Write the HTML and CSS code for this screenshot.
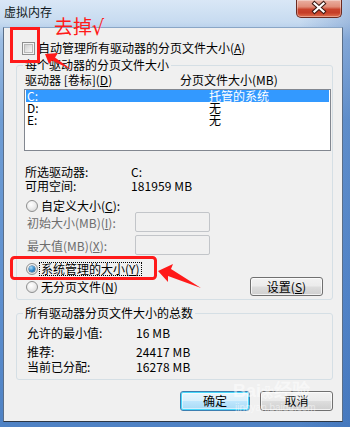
FILE: index.html
```html
<!DOCTYPE html>
<html lang="zh-CN">
<head>
<meta charset="utf-8">
<title>虚拟内存</title>
<link rel="stylesheet" href="styles.css">
</head>
<body>
<div class="window">
  <div class="titlebar">
    <span class="title">虚拟内存</span>
    <div class="close">
      <svg width="46" height="18" viewBox="0 0 46 18">
        <path d="M18.5 4.5 L27.5 12.5 M27.5 4.5 L18.5 12.5" stroke="#3b1a14" stroke-width="4.2" stroke-linecap="square"/>
        <path d="M18.5 4.5 L27.5 12.5 M27.5 4.5 L18.5 12.5" stroke="#ffffff" stroke-width="2.2" stroke-linecap="square"/>
      </svg>
    </div>
  </div>
  <div class="client">
    <div class="auto-row">
      <span class="checkbox"></span>
      <span>自动管理所有驱动器的分页文件大小(<u>A</u>)</span>
    </div>
    <fieldset class="group g1">
      <legend>每个驱动器的分页文件大小</legend>
      <div class="list-head"><span class="hcol1">驱动器 [卷标](<u>D</u>)</span><span>分页文件大小(MB)</span></div>
      <div class="listbox">
        <div class="lrow sel"><span class="lc1">C:</span><span>托管的系统</span></div>
        <div class="lrow"><span class="lc1">D:</span><span>无</span></div>
        <div class="lrow"><span class="lc1">E:</span><span>无</span></div>
      </div>
      <div class="info">
        <div class="kv"><span class="k">所选驱动器:</span><span class="mono">C:</span></div>
        <div class="kv"><span class="k">可用空间:</span><span class="mono">181959 MB</span></div>
      </div>
      <div class="radio-row r-custom"><span class="radio"></span><span>自定义大小(<u>C</u>):</span></div>
      <div class="size-row"><span class="slabel">初始大小(MB)(<u>I</u>):</span><span class="input"></span></div>
      <div class="size-row second"><span class="slabel">最大值(MB)(<u>X</u>):</span><span class="input"></span></div>
      <div class="radio-row r-system"><span class="radio on"></span><span class="focus">系统管理的大小(<u>Y</u>)</span></div>
      <div class="radio-row r-none">
        <span class="radio"></span><span>无分页文件(<u>N</u>)</span>
        <button class="btn set">设置(<u>S</u>)</button>
      </div>
    </fieldset>
    <fieldset class="group g2">
      <legend>所有驱动器分页文件大小的总数</legend>
      <div class="kv2 first"><span class="k2">允许的最小值:</span><span class="mono">16 MB</span></div>
      <div class="kv2 mid"><span class="k2">推荐:</span><span class="mono">24417 MB</span></div>
      <div class="kv2 last"><span class="k2">当前已分配:</span><span class="mono">16278 MB</span></div>
    </fieldset>
    <div class="actions">
      <button class="btn default ok">确定</button>
      <button class="btn cancel">取消</button>
    </div>
  </div>
</div>
<div class="watermark"><span class="wm1">Bai<span class="paw">❀</span>经验</span><span class="wm2">jingyan.baidu.com</span></div>
<svg class="annot" width="350" height="427" viewBox="0 0 350 427">
  <rect x="11.5" y="28.5" width="27" height="33" fill="none" stroke="#ff1a1a" stroke-width="3"/>
  <path d="M45 54 L58 53 L55 57.5 L72 70 L52 60.5 L49 64 Z" fill="#ff1a1a"/>
  <rect x="11.5" y="257.5" width="144" height="21" rx="3" fill="none" stroke="#ff1a1a" stroke-width="3"/>
  <path d="M158 271 L173 264 L171 269 L201 288 L168 276 L168 282 Z" fill="#ff1a1a"/>
</svg>
<div class="note">去掉<span class="tick">√</span></div>
</body>
</html>
```
FILE: styles.css
```css
* { box-sizing: border-box; }
html, body { margin: 0; padding: 0; }
body {
  width: 350px;
  height: 427px;
  overflow: hidden;
  position: relative;
  font-family: "Noto Sans CJK SC", "Noto Sans", sans-serif;
  font-size: 12px;
  color: #000;
  background: #5b8cca;
}
u { text-decoration: underline; text-underline-offset: 1px; }

.window {
  width: 350px;
  height: 427px;
  display: flex;
  flex-direction: column;
  background:
    linear-gradient(to right, rgba(255,255,255,0) 0, rgba(255,255,255,0) 300px, rgba(40,90,170,0.25) 350px),
    linear-gradient(to bottom, #d9e7f6 0, #c7dbf0 22px, #9dbde3 40px, #6f9dd4 120px, #5d8fcf 300px, #4f82c4 427px);
}

.titlebar {
  height: 27px;
  display: flex;
  align-items: flex-start;
  padding-left: 4px;
  flex-shrink: 0;
}
.title {
  margin-top: 4px;
  line-height: 16px;
  font-size: 12px;
  color: #101820;
}
.close {
  margin-left: auto;
  margin-right: 8px;
  width: 46px;
  height: 18px;
  border: 1px solid #6b2a20;
  border-top: none;
  border-radius: 0 0 5px 5px;
  background: linear-gradient(to bottom, #eab0a2 0, #e08c78 40%, #c9432c 55%, #c53d26 75%, #e0714f 100%);
  box-shadow: inset 0 0 0 1px rgba(255,255,255,0.35);
}
.close svg { display: block; margin: -1px 0 0 -1px; }

.client {
  margin: 0 7px 5px 3px;
  flex: 1;
  background: #f0f0f0;
  border: 1px solid #5a6e88;
  border-top-color: #8aa6c6;
  border-bottom-color: #2d3744;
  padding: 0 9px 0 12px;
  display: flex;
  flex-direction: column;
}

.auto-row {
  margin-top: 13px;
  height: 14px;
  display: flex;
  align-items: center;
  padding-left: 6px;
  line-height: 14px;
}
.checkbox {
  width: 13px;
  height: 13px;
  border: 1px solid #8e8f8f;
  background: #f4f4f4;
  box-shadow: inset 0 0 0 1px #f4f4f4, inset 0 0 0 2px #b9b9b9;
  margin-right: 3px;
  flex-shrink: 0;
  position: relative;
}
.checkbox::after {
  content: "";
  position: absolute;
  left: 2px; top: 2px; right: 2px; bottom: 2px;
  background: linear-gradient(135deg, #cfcfcf, #f7f7f7);
}

.group {
  margin: 0;
  padding: 0;
  min-width: 0;
  border: 1px solid #d5dfe5;
  border-radius: 3px;
}
.group legend {
  margin-left: 6px;
  padding: 0 2px;
  line-height: 16px;
  height: 16px;
}
.g1 { margin-top: 2px; padding-bottom: 3px; }

.list-head {
  height: 14px;
  line-height: 14px;
  padding-left: 8px;
  display: flex;
}
.hcol1 { width: 155px; }

.listbox {
  margin: 2px 1px 0 7px;
  height: 62px;
  border: 1px solid #828790;
  background: #fff;
  padding: 0 1px;
}
.lrow {
  height: 12px;
  line-height: 12px;
  display: flex;
  align-items: center;
  padding-left: 1px;
  white-space: nowrap;
}
.lrow.sel { background: #3399ff; color: #fff; }
.lc1 { width: 182px; }

.info { margin-top: 14px; }
.kv {
  height: 14px;
  line-height: 14px;
  display: flex;
  padding-left: 8px;
}
.k { width: 106px; }
.mono { letter-spacing: 0.1px; }

.radio-row {
  display: flex;
  align-items: center;
  padding-left: 9px;
}
.radio {
  width: 12px;
  height: 12px;
  border-radius: 50%;
  border: 1px solid #8e8f8f;
  background: radial-gradient(circle at 40% 35%, #ffffff 0, #f0f0f0 40%, #d2d2d2 100%);
  margin-right: 3px;
  flex-shrink: 0;
  position: relative;
}
.radio.on::after {
  content: "";
  position: absolute;
  left: 2px; top: 2px;
  width: 6px; height: 6px;
  border-radius: 50%;
  background: radial-gradient(circle at 35% 30%, #a9dcfb 0, #2a84c8 55%, #114c86 100%);
  box-shadow: 0 0 0 0.5px #1b4f80;
}
.r-custom { margin-top: 6px; height: 13px; line-height: 13px; }

.size-row {
  height: 20px;
  display: flex;
  align-items: center;
  padding-left: 10px;
}
.size-row.second { margin-top: 3px; }
.slabel { width: 108px; color: #6d6d6d; }
.input {
  width: 75px;
  height: 20px;
  border: 1px solid #c2c5c9;
  border-radius: 2px;
  background: #f0f0f0;
}

.r-system { margin-top: 7px; height: 14px; line-height: 12px; }
.focus {
  outline: 1px dotted #000;
  outline-offset: 0;
  padding: 0 1px;
  margin-left: -1px;
}

.r-none { margin-top: 1px; height: 19px; }

.btn {
  font: inherit;
  font-size: 12px;
  color: #000;
  height: 19px;
  line-height: 16px;
  padding: 0;
  border: 1px solid #707070;
  border-radius: 3px;
  background: linear-gradient(to bottom, #f2f2f2 0, #ebebeb 48%, #dddddd 52%, #cfcfcf 100%);
  box-shadow: inset 0 0 0 1px rgba(255,255,255,0.7);
}
.set { margin-left: auto; margin-right: 9px; width: 73px; }

.g2 { margin-top: 5px; padding-bottom: 5px; }
.kv2 {
  height: 14px;
  line-height: 14px;
  display: flex;
  padding-left: 10px;
}
.kv2.first { margin-top: 5px; }
.kv2.mid { margin-top: 5px; }
.kv2.last { margin-top: 1px; }
.k2 { width: 109px; }

.actions {
  margin-top: 11px;
  display: flex;
  justify-content: flex-end;
  gap: 10px;
}
.ok { width: 70px; height: 20px; }
.cancel { width: 73px; height: 20px; }
.btn.default {
  border-color: #3c7fb1;
  background: linear-gradient(to bottom, #eaf6fd 0, #d9f0fc 48%, #bee6fd 52%, #a7d9f5 100%);
  box-shadow: inset 0 0 0 1px #48d8fb, inset 0 0 0 2px rgba(255,255,255,0.5);
}

.annot {
  position: absolute;
  left: 0;
  top: 0;
  pointer-events: none;
}
.note {
  position: absolute;
  left: 54px;
  top: 13px;
  font-size: 19px;
  line-height: 26px;
  color: #ff1a1a;
  pointer-events: none;
  white-space: nowrap;
}
.tick {
  font-family: "DejaVu Sans", sans-serif;
  font-size: 19px;
  display: inline-block;
  transform: scaleY(1.1);
}
.watermark {
  position: absolute;
  left: 233px;
  top: 382px;
  display: flex;
  flex-direction: column;
  color: rgba(255,255,255,0.5);
  pointer-events: none;
}
.wm1 { font-family: "Liberation Sans", sans-serif; font-size: 18px; line-height: 18px; font-weight: bold; }
.paw { font-size: 13px; }
.wm2 { font-family: "Liberation Sans", sans-serif; font-size: 10px; line-height: 11px; margin-left: 2px; }
```
